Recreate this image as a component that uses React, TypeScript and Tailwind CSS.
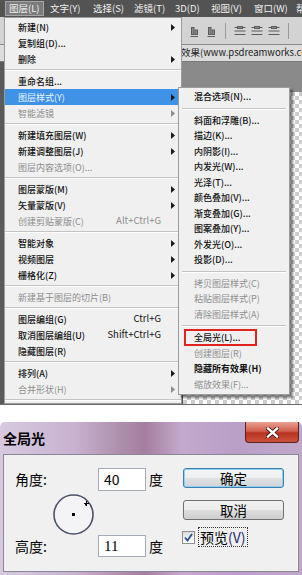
type Item = { t: string; k?: string; arrow?: boolean; dis?: boolean; active?: boolean; bold?: boolean; mark?: boolean } | "sep";

const mainItems: Item[] = [
  { t: "新建(N)", arrow: true },
  { t: "复制组(D)..." },
  { t: "删除", arrow: true },
  "sep",
  { t: "重命名组..." },
  { t: "图层样式(Y)", arrow: true, active: true },
  { t: "智能滤镜", arrow: true, dis: true },
  "sep",
  { t: "新建填充图层(W)", arrow: true },
  { t: "新建调整图层(J)", arrow: true },
  { t: "图层内容选项(O)...", dis: true },
  "sep",
  { t: "图层蒙版(M)", arrow: true },
  { t: "矢量蒙版(V)", arrow: true },
  { t: "创建剪贴蒙版(C)", k: "Alt+Ctrl+G", dis: true },
  "sep",
  { t: "智能对象", arrow: true },
  { t: "视频图层", arrow: true },
  { t: "栅格化(Z)", arrow: true },
  "sep",
  { t: "新建基于图层的切片(B)", dis: true },
  "sep",
  { t: "图层编组(G)", k: "Ctrl+G" },
  { t: "取消图层编组(U)", k: "Shift+Ctrl+G" },
  { t: "隐藏图层(R)" },
  "sep",
  { t: "排列(A)", arrow: true },
  { t: "合并形状(H)", arrow: true, dis: true },
  "sep",
];

const subItems: Item[] = [
  { t: "混合选项(N)..." },
  "sep",
  { t: "斜面和浮雕(B)..." },
  { t: "描边(K)..." },
  { t: "内阴影(I)..." },
  { t: "内发光(W)..." },
  { t: "光泽(T)..." },
  { t: "颜色叠加(V)..." },
  { t: "渐变叠加(G)..." },
  { t: "图案叠加(Y)..." },
  { t: "外发光(O)..." },
  { t: "投影(D)..." },
  "sep",
  { t: "拷贝图层样式(C)", dis: true },
  { t: "粘贴图层样式(P)", dis: true },
  { t: "清除图层样式(A)", dis: true },
  "sep",
  { t: "全局光(L)...", mark: true },
  { t: "创建图层(R)", dis: true },
  { t: "隐藏所有效果(H)", bold: true },
  { t: "缩放效果(F)...", dis: true },
];

const menuBar = [
  { t: "图层(L)", w: "w-[41px]" },
  { t: "文字(Y)", w: "w-[43px]" },
  { t: "选择(S)", w: "w-[41px]" },
  { t: "滤镜(T)", w: "w-[41px]" },
  { t: "3D(D)", w: "w-[36px]" },
  { t: "视图(V)", w: "w-[43px]" },
  { t: "窗口(W)", w: "w-[42px]" },
  { t: "帮助(H)", w: "w-[42px]" },
];

function Arrow({ color }: { color: string }) {
  return (
    <svg width="4" height="7" viewBox="0 0 4 7" className="shrink-0">
      <path d="M0 0 L4 3.5 L0 7 Z" fill={color} />
    </svg>
  );
}

function AlignIcon({ kind }: { kind: number }) {
  return (
    <svg width="12" height="12" viewBox="0 0 12 12" className="shrink-0">
      {kind === 1 && (
        <g fill="none" stroke="#5c5c5c" strokeWidth="1">
          <path d="M2.5 11.5 H10" />
          <rect x="3.5" y="2.5" width="2.5" height="7" fill="#8a8a8a" />
          <rect x="7" y="5" width="2.5" height="4.5" fill="#8a8a8a" />
        </g>
      )}
      {kind === 2 && (
        <g fill="none" stroke="#5c5c5c" strokeWidth="1">
          <path d="M0.5 2.5 H11.5 M0.5 6 H11.5 M0.5 9.5 H11.5" />
          <rect x="3.5" y="1.5" width="5" height="2" fill="#8a8a8a" />
        </g>
      )}
    </svg>
  );
}

function MainMenu() {
  return (
    <div className="absolute left-[4px] top-[17px] w-[178px] border border-[#9c9c9c] bg-[#f0f0f0] pt-[1px]">
      {mainItems.map((it, i) =>
        it === "sep" ? (
          <div key={i} className="flex h-[6px] flex-col justify-center">
            <div className="h-px bg-[#c4c4c4]" />
            <div className="h-px bg-white" />
          </div>
        ) : (
          <div
            key={i}
            className={`flex h-[16px] items-center pl-[13px] pr-[6px] ${it.active ? "bg-[#3f92e6] text-[#eef6ff]" : it.dis ? "text-[#8e8e8e]" : "font-medium text-[#111]"}`}
          >
            <span className="flex-1 whitespace-nowrap">{it.t}</span>
            {it.k && <span className="mr-[7px] whitespace-nowrap text-[9.5px] font-normal">{it.k}</span>}
            <span className="flex w-[7px] justify-end">
              {it.arrow && <Arrow color={it.dis ? "#8e8e8e" : "#1b1b1b"} />}
            </span>
          </div>
        )
      )}
    </div>
  );
}

function SubMenu() {
  return (
    <div className="absolute left-[178px] top-[87px] w-[112px] border border-[#9c9c9c] bg-[#f0f0f0] pt-[1px] pb-[2px] shadow-[3px_3px_2px_rgba(0,0,0,0.45)]">
      {subItems.map((it, i) =>
        it === "sep" ? (
          <div key={i} className="flex h-[8px] flex-col justify-center px-[3px]">
            <div className="h-px bg-[#c4c4c4]" />
            <div className="h-px bg-white" />
          </div>
        ) : (
          <div
            key={i}
            className={`flex h-[15.5px] items-center whitespace-nowrap ${it.mark ? "pl-[5px]" : "pl-[15px]"} ${it.dis ? "text-[#8e8e8e]" : "text-[#111]"} ${it.bold ? "font-bold" : it.dis ? "" : "font-medium"}`}
          >
            {it.mark ? (
              <span className="flex h-[17px] w-[73px] items-center border-2 border-[#e0231e] pl-[8px]">{it.t}</span>
            ) : (
              it.t
            )}
          </div>
        )
      )}
    </div>
  );
}

function Screen() {
  return (
    <div className="relative h-[405px] overflow-hidden bg-[#6b6b6b] text-[9px] font-['Noto_Sans_CJK_SC',sans-serif] leading-none">
      <div className="flex h-[17px] items-center bg-[#535353] pl-[5px] text-[9.5px] text-[#f1f1f1]">
        {menuBar.map((m, i) => (
          <div key={i} className={`${m.w} shrink-0`}>
            <span
              className={`inline-flex h-[15px] items-center px-[3px] whitespace-nowrap ${i === 0 ? "border border-[#a5a5a5] bg-[#7b7b7b]" : "border border-transparent"}`}
            >
              {m.t}
            </span>
          </div>
        ))}
      </div>
      <div className="flex h-[28px] items-center gap-[5px] border-b border-[#8a8a8a] bg-[#d3d3d3] pl-[188px]">
        <AlignIcon kind={1} />
        <AlignIcon kind={1} />
        <div className="mx-[3px] h-[16px] w-px bg-[#9a9a9a]" />
        <AlignIcon kind={2} />
        <AlignIcon kind={2} />
        <AlignIcon kind={2} />
        <div className="mx-[3px] h-[16px] w-px bg-[#9a9a9a]" />
      </div>
      <div className="flex h-[17px] items-center border-b border-[#7a7a7a] bg-[#dcdcdc] pl-[181px] text-[9.5px] text-[#222] whitespace-nowrap">
        效果(www.psdreamworks.com
      </div>
      <div className="flex h-[342px]">
        <div className="w-[4px] bg-[#5a5a5a]" />
        <div className="flex flex-1 flex-col">
          <div className="h-[30px] bg-[#8a8a8a]" />
          <div className="flex flex-1">
            <div className="w-[178px] bg-[#8a8a8a]" />
            <div className="flex-1 border-l border-[#555] bg-[conic-gradient(#cdcdcd_25%,#ffffff_0_50%,#cdcdcd_0_75%,#ffffff_0)] bg-[length:8px_8px]" />
          </div>
        </div>
      </div>
      <MainMenu />
      <SubMenu />
    </div>
  );
}

function Dialog() {
  return (
    <div className="flex h-[153px] flex-col rounded-t-[5px] bg-[linear-gradient(90deg,#d7cadf_0%,#c7b1cf_25%,#ad8fab_40%,#a57e9f_48%,#c3a9cc_60%,#b99fc6_78%,#c0a8cb_100%)] font-['Noto_Sans_CJK_SC',sans-serif]">
      <div className="flex h-[32px] items-start justify-between">
        <div className="pl-[3px] pt-[9px] text-[14px] font-bold leading-none text-black">全局光</div>
        <div className="mr-[3px] flex h-[21px] w-[54px] items-center justify-center rounded-b-[4px] border border-t-0 border-[#5a1f1f] bg-[linear-gradient(180deg,#e9a193_0%,#d0614f_45%,#b83320_55%,#c9533c_100%)]">
          <svg width="13" height="11" viewBox="0 0 13 11">
            <path d="M2 1.5 L11 9.5 M11 1.5 L2 9.5" stroke="#3a1010" strokeWidth="4" strokeLinecap="square" />
            <path d="M2 1.5 L11 9.5 M11 1.5 L2 9.5" stroke="#ffffff" strokeWidth="2.4" strokeLinecap="square" />
          </svg>
        </div>
      </div>
      <div className="mx-[3px] flex h-[118px] border border-[#8b8598] bg-[#f0f0f0]">
        <div className="w-[179px] pt-[13px]">
          <div className="flex h-[23px] items-center">
            <span className="w-[94px] pl-[11px] text-[14px] text-black">角度:</span>
            <div className="flex h-[23px] w-[48px] items-center border border-[#a5acb5] bg-white pl-[5px] text-[14px] text-black">40</div>
            <span className="ml-[3px] text-[14px] text-black">度</span>
          </div>
          <div className="ml-[49px] mt-[3px] h-[41px] w-[41px]">
            <svg width="41" height="41" viewBox="0 0 41 41">
              <circle cx="20.5" cy="20.5" r="19.5" fill="#f4f4f6" stroke="#4c526c" strokeWidth="1.6" />
              <rect x="19" y="19" width="3" height="3" fill="#000" />
              <path d="M33.5 7 V12 M31 9.5 H36" stroke="#000" strokeWidth="1" />
              <rect x="32" y="10" width="1.5" height="1.5" fill="#000" />
            </svg>
          </div>
          <div className="flex h-[22px] items-center">
            <span className="w-[94px] pl-[11px] text-[14px] text-black">高度:</span>
            <div className="flex h-[22px] w-[48px] items-center border border-[#a5acb5] bg-white pl-[5px] font-['Liberation_Serif',serif] text-[15px] text-black">11</div>
            <span className="ml-[3px] text-[14px] text-black">度</span>
          </div>
        </div>
        <div className="flex flex-col pt-[13px]">
          <div className="flex h-[20px] w-[101px] items-center justify-center rounded-[3px] border border-[#3c7fb1] bg-[linear-gradient(180deg,#f4f6f8_0%,#eceef0_50%,#dfe2e5_51%,#d2d5d8_100%)] text-[13.5px] text-black shadow-[inset_0_0_0_1px_#8fd0f2]">
            确定
          </div>
          <div className="mt-[12px] flex h-[20px] w-[101px] items-center justify-center rounded-[3px] border border-[#707070] bg-[linear-gradient(180deg,#f2f2f2_0%,#ebebeb_50%,#dddddd_51%,#cfcfcf_100%)] text-[13.5px] text-black">
            取消
          </div>
          <div className="ml-[-1px] mt-[7px] flex h-[20px] items-center">
            <div className="flex h-[13px] w-[13px] items-center justify-center border border-[#8e8f8f] bg-[linear-gradient(180deg,#dcdcdc,#ffffff)]">
              <svg width="9" height="9" viewBox="0 0 9 9">
                <path d="M1 4.5 L3.5 7.5 L8 1" fill="none" stroke="#2b4f8a" strokeWidth="1.8" />
              </svg>
            </div>
            <span className="ml-[3px] flex h-[20px] items-center border border-dotted border-[#333] px-[1px] text-[14px] text-black">
              预览<span className="text-[#1d2a6b]">(V)</span>
            </span>
          </div>
        </div>
      </div>
    </div>
  );
}

export default function App() {
  return (
    <div className="h-[575px] w-[302px] overflow-hidden bg-white">
      <Screen />
      <div className="h-[17px]" />
      <Dialog />
    </div>
  );
}
